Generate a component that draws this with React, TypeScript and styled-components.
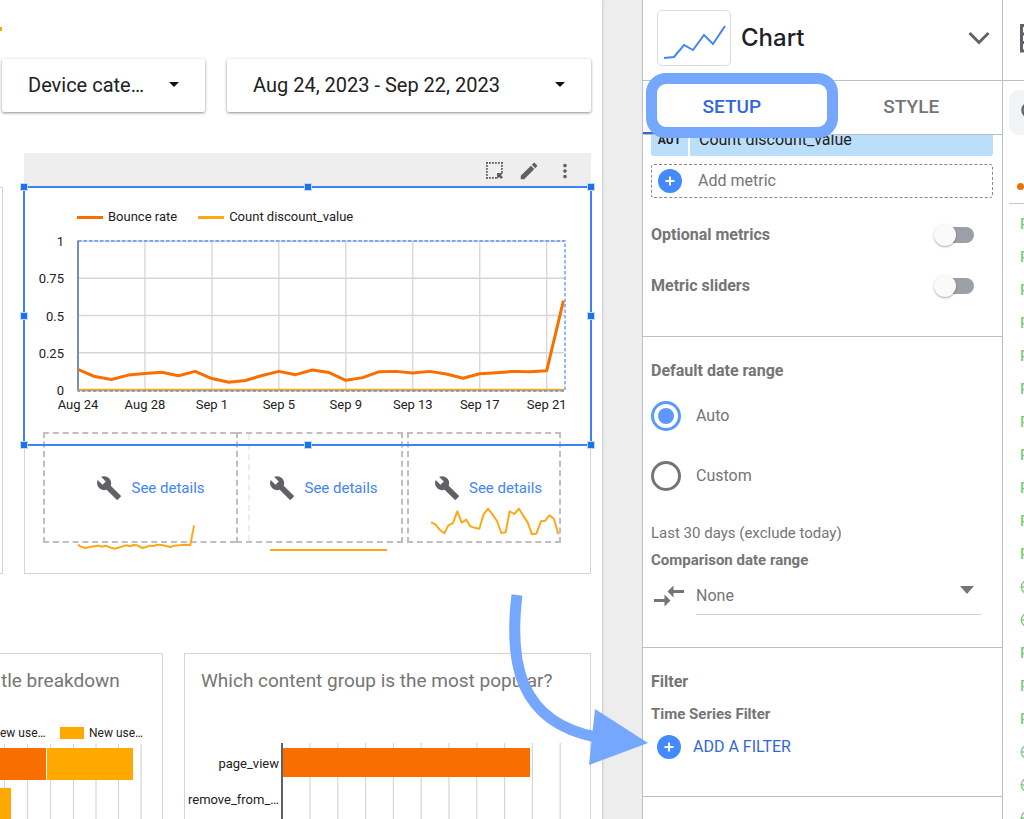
import React from "react";
import styled, { createGlobalStyle, css } from "styled-components";
import { MdBuild, MdCompareArrows, MdEdit, MdMoreVert } from "react-icons/md";
import { Globe, Search } from "lucide-react";

const color = {
  orange: "#f86f00",
  amber: "#ffa800",
  spark: "#ffa817",
  select: "#3d82f0",
  handle: "#1a73e8",
  link: "#4285f4",
  action: "#3367d6",
  mark: "#76a7fe",
  grid: "#d6d6d6",
  rule: "#bdc1c6",
  card: "#d4d4d4",
  muted: "#757575",
};

const GlobalStyle = createGlobalStyle`
  * { box-sizing: border-box; }
  body {
    margin: 0;
    background: #fff;
    color: #212121;
    font-family: Roboto, "Liberation Sans", sans-serif;
    font-size: 16px;
    line-height: 20px;
  }
  button, input, select { font: inherit; margin: 0; }
  svg { display: block; }
`;

const Shell = styled.div`
  display: flex;
  height: 100vh;
  overflow: hidden;
`;

/* ---------- report canvas ---------- */

const Canvas = styled.main`
  flex: 1;
  min-width: 0;
  overflow: hidden;
  background: #ededed;
  padding-right: 40px;
`;

const Page = styled.div`
  min-height: 100%;
  padding-right: 11px;
  background: #fff;
  box-shadow: 0 0 3px rgba(0, 0, 0, 0.25);
`;

const TopStrip = styled.div`
  height: 59px;
  padding-top: 27px;
`;

const LegendTail = styled.div`
  width: 2px;
  height: 4px;
  background: ${color.amber};
`;

const Controls = styled.div`
  display: flex;
  gap: 22px;
  padding-left: 2px;
`;

const Dropdown = styled.button<{ $grow?: boolean }>`
  display: flex;
  align-items: center;
  justify-content: space-between;
  flex: ${(p) => (p.$grow ? "1" : "0 0 203px")};
  height: 53px;
  padding: 0 26px 2px;
  border: 0;
  border-radius: 2px;
  background: #fff;
  color: #212121;
  font-size: 20px;
  text-align: left;
  white-space: nowrap;
  box-shadow: 0 1px 3px rgba(0, 0, 0, 0.45);
`;

const Caret = styled.i<{ $large?: boolean }>`
  display: block;
  width: 0;
  height: 0;
  border-style: solid;
  border-color: ${(p) => (p.$large ? color.muted : "#111")} transparent transparent;
  border-width: ${(p) => (p.$large ? "8px 7px 0" : "5px 5px 0")};
`;

const ChartRow = styled.div`
  display: grid;
  grid-template-columns: 3px minmax(0, 1fr);
  gap: 21px;
  margin-top: 41px;
`;

const NeighbourCard = styled.div`
  margin-top: 34px;
  border: solid ${color.card};
  border-width: 1px 1px 1px 0;
`;

const ChartTools = styled.div`
  display: flex;
  justify-content: flex-end;
  align-items: center;
  gap: 14px;
  height: 34px;
  padding: 2px 15px 0 0;
  background: #eee;
`;

const ToolButton = styled.button`
  padding: 0;
  border: 0;
  background: none;
  color: #616161;
`;

const ChartCard = styled.section`
  position: relative;
  padding: 19px 0 30px;
  border: 1px solid ${color.card};
`;

const Selection = styled.div`
  position: absolute;
  top: -1px;
  left: -1px;
  right: -1px;
  height: 258px;
  outline: 2px solid ${color.select};
  outline-offset: -1px;
  pointer-events: none;
`;

const Handle = styled.i<{ $x: number; $y: number }>`
  position: absolute;
  left: ${(p) => p.$x}%;
  top: ${(p) => p.$y}%;
  width: 8px;
  height: 8px;
  margin: -4px;
  border: 1px solid #c3d8fb;
  background: ${color.handle};
`;

const LineLegend = styled.div`
  display: flex;
  gap: 21px;
  padding-left: 52px;
  font-size: 13px;
`;

const LegendItem = styled.span`
  display: flex;
  align-items: center;
  gap: 5px;
`;

const LineSwatch = styled.i<{ $color: string }>`
  width: 26px;
  height: 3px;
  background: ${(p) => p.$color};
`;

const FluidSvg = styled.svg`
  width: 100%;
  height: auto;
  font-family: Roboto, "Liberation Sans", sans-serif;
  fill: #212121;
`;

const Tiles = styled.div`
  display: grid;
  grid-template-columns: minmax(0, 193fr) minmax(0, 167fr) minmax(0, 158fr);
  margin: 14px 29px 0 18px;
`;

const Tile = styled.div<{ $joined?: boolean; $apart?: boolean; $inset: number }>`
  position: relative;
  display: flex;
  align-items: center;
  justify-content: center;
  gap: 9px;
  height: 111px;
  padding-left: ${(p) => p.$inset}px;
  border: 2px dashed #bdbfc4;
  ${(p) => p.$joined && css`border-right: 0;`}
  ${(p) => p.$apart && css`margin-left: 4px;`}
  color: #5f6164;
  font-size: 15px;
  white-space: nowrap;
`;

const TileGuide = styled.i`
  position: absolute;
  left: 10px;
  top: 0;
  bottom: 0;
  border-left: 2px dashed #ececee;
`;

const DetailsLink = styled.a`
  color: ${color.link};
  text-decoration: none;
`;

const Spark = styled.svg<{ $left: number; $top: number }>`
  position: absolute;
  left: ${(p) => p.$left}px;
  top: ${(p) => p.$top}px;
  fill: none;
  stroke: ${color.spark};
  stroke-width: 6;
  stroke-linejoin: round;
`;

const BreakdownRow = styled.div`
  display: grid;
  grid-template-columns: 163px minmax(0, 1fr);
  gap: 21px;
  margin-top: 79px;
`;

const BarCard = styled.section<{ $cut?: boolean }>`
  padding-top: 15px;
  border: 1px solid ${color.card};
  ${(p) => p.$cut && css`border-left: 0;`}
`;

const BarTitle = styled.h2<{ $cut?: boolean }>`
  margin: 0;
  padding-left: ${(p) => (p.$cut ? 1 : 16)}px;
  color: ${color.muted};
  font-size: 19px;
  font-weight: 400;
  line-height: 24px;
  white-space: nowrap;
`;

const BarLegend = styled.div`
  display: grid;
  grid-template-columns: 40px 1fr;
  gap: 20px;
  margin-top: 32px;
  font-size: 12px;
  line-height: 16px;
  white-space: nowrap;
`;

const BoxSwatch = styled.i`
  width: 24px;
  height: 12px;
  background: ${color.amber};
`;

const BarPlot = styled.div`
  margin-top: 50px;
`;

/* ---------- setup panel ---------- */

const Panel = styled.aside`
  position: relative;
  display: flex;
  flex-direction: column;
  flex: 0 0 361px;
  background: #fff;
  border: solid ${color.rule};
  border-width: 0 1px;
`;

const PanelHeader = styled.header`
  display: flex;
  align-items: center;
  flex: none;
  gap: 10px;
  height: 81px;
  padding: 0 12px 4px 14px;
  border-bottom: 1px solid ${color.rule};
`;

const ChartThumb = styled.div`
  width: 74px;
  height: 56px;
  border: 1px solid #dadce0;
  border-radius: 5px;
`;

const PanelTitle = styled.h1`
  flex: 1;
  margin: 0;
  color: #202124;
  font-family: Inter, Roboto, sans-serif;
  font-size: 24px;
  font-weight: 500;
  line-height: 32px;
`;

const Tabs = styled.div`
  display: flex;
  flex: none;
  height: 54px;
  border-bottom: 1px solid ${color.rule};
`;

const Tab = styled.button<{ $active?: boolean }>`
  position: relative;
  flex: 1;
  padding: 0 2px 2px 0;
  border: 0;
  background: none;
  color: ${(p) => (p.$active ? color.action : color.muted)};
  font-size: 19px;
  font-weight: 500;
  ${(p) =>
    p.$active &&
    css`
      box-shadow: inset 0 -2px ${color.action};
    `}
`;

const TabFocus = styled.span`
  position: absolute;
  z-index: 1;
  top: -8px;
  left: 3px;
  right: -15px;
  bottom: -4px;
  border: 11px solid ${color.mark};
  border-radius: 20px;
`;

const PanelBody = styled.div`
  flex: 1;
  min-height: 0;
  overflow: hidden;
`;

const Section = styled.section<{ $height: number }>`
  height: ${(p) => p.$height}px;
  padding: 0 9px 0 8px;
  border-bottom: 1px solid ${color.rule};
`;

const MetricChip = styled.div`
  display: flex;
  gap: 2px;
  height: 32px;
  margin-top: -11px;
  border-radius: 3px;
  overflow: hidden;
  line-height: 32px;
  color: #202124;
`;

const ChipType = styled.span`
  width: 37px;
  background: #bbdefb;
  font-size: 12px;
  font-weight: 700;
  text-align: center;
`;

const ChipName = styled.span`
  flex: 1;
  padding-left: 9px;
  background: #bbdefb;
`;

const AddMetric = styled.button`
  display: flex;
  align-items: center;
  gap: 16px;
  width: 100%;
  height: 34px;
  margin-top: 8px;
  padding: 0 6px;
  border: 1px dashed #8a8a8a;
  border-radius: 3px;
  background: none;
  color: ${color.muted};
`;

const ToggleRow = styled.label`
  display: flex;
  align-items: center;
  justify-content: space-between;
  height: 51px;
  padding-right: 19px;
  color: ${color.muted};
  font-weight: 700;
`;

const ToggleGroup = styled.div`
  padding-top: 11px;
`;

const Toggle = styled.input`
  appearance: none;
  position: relative;
  width: 34px;
  height: 16px;
  border-radius: 8px;
  background: #9aa0a6;
  &::before {
    content: "";
    position: absolute;
    left: -6px;
    top: -3px;
    width: 22px;
    height: 22px;
    border-radius: 50%;
    background: #fafafa;
    box-shadow: 0 1px 2px rgba(0, 0, 0, 0.35);
  }
`;

const SectionTitle = styled.h3<{ $small?: boolean }>`
  margin: 0;
  padding-top: ${(p) => (p.$small ? 0 : 24)}px;
  color: ${color.muted};
  font-size: ${(p) => (p.$small ? 15 : 16)}px;
  font-weight: 700;
  line-height: 20px;
`;

const RadioGroup = styled.div`
  display: flex;
  flex-direction: column;
  gap: 30px;
  margin-top: 20px;
`;

const RadioLabel = styled.label`
  display: flex;
  align-items: center;
  gap: 15px;
  height: 30px;
  color: ${color.muted};
`;

const Radio = styled.input`
  appearance: none;
  display: grid;
  place-items: center;
  width: 30px;
  height: 30px;
  border: 3px solid ${color.muted};
  border-radius: 50%;
  &:checked {
    border-color: #5c98ff;
  }
  &:checked::before {
    content: "";
    width: 16px;
    height: 16px;
    border-radius: 50%;
    background: #5c98ff;
  }
`;

const Note = styled.p`
  margin: 32px 0 7px;
  color: ${color.muted};
  font-size: 15px;
`;

const SelectRow = styled.label`
  display: flex;
  align-items: center;
  gap: 9px;
  height: 44px;
  margin-top: 4px;
  padding-right: 12px;
  color: ${color.muted};
`;

const SelectBox = styled.span`
  display: flex;
  align-items: flex-start;
  flex: 1;
  padding-right: 7px;
  border-bottom: 1px solid #cfcfcf;
`;

const Select = styled.select`
  appearance: none;
  flex: 1;
  height: 36px;
  padding: 0;
  border: 0;
  background: none;
  color: ${color.muted};
`;

const SelectCaret = styled.span`
  padding-top: 8px;
`;

const FilterName = styled.div`
  padding: 12px 0 11px;
`;

const AddFilter = styled.button`
  display: flex;
  align-items: center;
  gap: 12px;
  padding: 0 6px;
  border: 0;
  background: none;
  color: ${color.action};
`;

const IconButton = styled.button`
  padding: 0;
  border: 0;
  background: none;
`;

const PointerArrow = styled.svg`
  position: absolute;
  z-index: 2;
  left: -137px;
  top: 590px;
  pointer-events: none;
`;

/* ---------- data panel ---------- */

const DataPanel = styled.aside`
  flex: 0 0 21px;
  overflow: hidden;
  white-space: nowrap;
`;

const DataHeader = styled.div`
  height: 81px;
  padding: 24px 0 0 17px;
  border-bottom: 1px solid ${color.rule};
`;

const SearchBox = styled.div`
  width: 200px;
  height: 45px;
  margin: 9px 0 0 6px;
  padding: 11px;
  border-radius: 10px;
  background: #f1f3f4;
  color: #5f6368;
`;

const SourceRow = styled.div`
  width: 200px;
  height: 69px;
  margin-left: 6px;
  padding: 48px 0 0 8px;
  border-bottom: 1px solid #c4c7cc;
`;

const SourceDot = styled.i`
  display: block;
  width: 7px;
  height: 7px;
  border-radius: 50%;
  background: #e8710a;
`;

const FieldList = styled.ul`
  margin: 0;
  padding: 3px 0 0 17px;
  list-style: none;
`;

const Field = styled.li`
  display: flex;
  align-items: center;
  height: 33px;
  color: #81c784;
  font-size: 15px;
  font-weight: 500;
  svg { flex: none; }
`;

/* ---------- data ---------- */

const bounceRate = [
  0.138, 0.09, 0.07, 0.1, 0.11, 0.119, 0.096, 0.125, 0.077, 0.052, 0.064, 0.097,
  0.125, 0.103, 0.134, 0.117, 0.065, 0.083, 0.123, 0.125, 0.114, 0.125, 0.107,
  0.079, 0.109, 0.116, 0.125, 0.123, 0.13, 0.6,
];
const dayTicks = ["Aug 24", "Aug 28", "Sep 1", "Sep 5", "Sep 9", "Sep 13", "Sep 17", "Sep 21"];
const rateTicks = [1, 0.75, 0.5, 0.25, 0];
const fieldKinds = "TTTTTTTTTTTGGTTTGGG".split("");

const plot = { left: 53, top: 14, width: 486, height: 149, step: 16.74 };
const dayX = (i: number) => plot.left + i * plot.step;
const rateY = (v: number) => plot.top + (1 - v) * plot.height;

function TimeSeries() {
  return (
    <FluidSvg viewBox="0 0 565 191" role="img" aria-label="Bounce rate by day">
      {rateTicks.map((v) => (
        <g key={v}>
          <path d={`M${plot.left} ${rateY(v)}h${plot.width}`} stroke={color.grid} strokeWidth="1.3" />
          <text x="39" y={rateY(v) + 5} fontSize="13" textAnchor="end">{v}</text>
        </g>
      ))}
      {dayTicks.map((t, i) => (
        <g key={t}>
          <path d={`M${dayX(i * 4)} ${plot.top}v${plot.height}`} stroke={color.grid} strokeWidth="1.3" />
          <text x={dayX(i * 4)} y="182" fontSize="13" textAnchor="middle">{t}</text>
        </g>
      ))}
      <path d={`M${plot.left} ${plot.top}v${plot.height}`} stroke="#333" strokeWidth="1" />
      <path d={`M${plot.left} 163h${plot.width}`} stroke={color.spark} strokeWidth="2.5" />
      <polyline
        points={bounceRate.map((v, i) => `${dayX(i)},${rateY(v)}`).join(" ")}
        fill="none"
        stroke={color.orange}
        strokeWidth="3"
        strokeLinejoin="round"
      />
      <rect
        x={plot.left}
        y={plot.top}
        width={plot.width + 1}
        height={plot.height + 1}
        fill="none"
        stroke="#5b93ee"
        strokeWidth="1.3"
        strokeDasharray="3.5 2"
      />
    </FluidSvg>
  );
}

function MarqueeIcon() {
  const steps = [0, 3, 6, 9, 12, 15];
  return (
    <svg width="18" height="18" viewBox="0 0 18 18" fill="currentColor" aria-hidden="true">
      {steps.map((s) => (
        <g key={s}>
          <rect x={s} y="0" width="1.8" height="1.8" />
          <rect x="0" y={s} width="1.8" height="1.8" />
          {s < 10 && <rect x={s} y="15" width="1.8" height="1.8" />}
          {s < 10 && <rect x="15" y={s} width="1.8" height="1.8" />}
        </g>
      ))}
      <path d="M11 11H17L15 13L17 15.2L15.2 17L13 15L11 17Z" />
    </svg>
  );
}

function Details() {
  return (
    <>
      <MdBuild size={26} />
      <DetailsLink href="#details">See details</DetailsLink>
    </>
  );
}

function PlusBadge() {
  return (
    <svg width="24" height="24" viewBox="0 0 24 24" aria-hidden="true">
      <circle cx="12" cy="12" r="12" fill="#448aff" />
      <path d="M12 7.5v9M7.5 12h9" stroke="#fff" strokeWidth="2" />
    </svg>
  );
}

export default function App() {
  return (
    <>
      <GlobalStyle />
      <Shell>
        <Canvas>
          <Page>
            <TopStrip>
              <LegendTail />
            </TopStrip>
            <Controls>
              <Dropdown>
                Device cate…
                <Caret />
              </Dropdown>
              <Dropdown $grow>
                Aug 24, 2023 - Sep 22, 2023
                <Caret />
              </Dropdown>
            </Controls>

            <ChartRow>
              <NeighbourCard />
              <div>
                <ChartTools>
                  <ToolButton aria-label="Select area"><MarqueeIcon /></ToolButton>
                  <ToolButton aria-label="Edit"><MdEdit size={22} /></ToolButton>
                  <ToolButton aria-label="More"><MdMoreVert size={22} /></ToolButton>
                </ChartTools>
                <ChartCard>
                  <LineLegend>
                    <LegendItem><LineSwatch $color={color.orange} />Bounce rate</LegendItem>
                    <LegendItem><LineSwatch $color={color.spark} />Count discount_value</LegendItem>
                  </LineLegend>
                  <TimeSeries />
                  <Tiles>
                    <Tile $joined $inset={20}>
                      <Details />
                      <Spark $left={32} $top={90} width="118" height="26" viewBox="0 0 354 78">
                        <path d="M3 62L13 69L26 72L38 69L52 67L65 65L73 68L86 65L98 70L113 74L128 70L146 64L160 67L168 63L181 64L196 72L208 69L218 65L231 66L240 62L255 63L266 66L280 69L293 65L313 63L321 62L340 63L351 4" />
                      </Spark>
                    </Tile>
                    <Tile $inset={8}>
                      <TileGuide />
                      <Details />
                      <Spark $left={32} $top={114} width="117" height="4" viewBox="0 0 351 12">
                        <path d="M0 6H351" />
                      </Spark>
                    </Tile>
                    <Tile $apart $inset={8}>
                      <Details />
                      <Spark $left={21} $top={73} width="130" height="29" viewBox="0 0 390 87">
                        <path d="M3 46L16 52L29 68L43 79L55 55L69 48L82 13L95 47L109 38L121 58L133 62L148 65L161 22L174 5L188 23L201 42L214 78L227 76L239 13L253 21L267 5L279 25L293 46L306 82L319 80L333 43L346 41L358 25L372 36L385 82" />
                      </Spark>
                    </Tile>
                  </Tiles>
                  <Selection>
                    {[0, 50, 100].flatMap((x) =>
                      [0, 50, 100]
                        .filter((y) => x !== 50 || y !== 50)
                        .map((y) => <Handle key={`${x}-${y}`} $x={x} $y={y} />)
                    )}
                  </Selection>
                </ChartCard>
              </div>
            </ChartRow>

            <BreakdownRow>
              <BarCard $cut>
                <BarTitle $cut>tle breakdown</BarTitle>
                <BarLegend>
                  <LegendItem>ew use…</LegendItem>
                  <LegendItem><BoxSwatch />New use…</LegendItem>
                </BarLegend>
                <FluidSvg viewBox="0 0 162 90">
                  {[4.5, 27.5, 50.5, 73.5, 96, 118.5, 141].map((x) => (
                    <path key={x} d={`M${x} 3V90`} stroke={color.grid} strokeWidth="1.2" />
                  ))}
                  <rect x="0" y="7" width="46" height="32" fill={color.orange} />
                  <rect x="46" y="7" width="1.5" height="32" fill="#fff" />
                  <rect x="47" y="7" width="86" height="32" fill={color.amber} />
                  <rect x="0" y="47" width="11" height="32" fill={color.amber} />
                </FluidSvg>
              </BarCard>
              <BarCard>
                <BarTitle>Which content group is the most popular?</BarTitle>
                <BarPlot>
                  <FluidSvg viewBox="0 0 405 86">
                    {Array.from({ length: 10 }, (_, i) => (
                      <path key={i} d={`M${125 + i * 27.8} 0V86`} stroke={color.grid} strokeWidth="1.2" />
                    ))}
                    <rect x="98" y="5" width="247" height="29" fill={color.orange} />
                    <path d="M97 0V86" stroke="#616161" strokeWidth="2" />
                    <text x="94" y="25" fontSize="13" textAnchor="end">page_view</text>
                    <text x="94" y="61" fontSize="13" textAnchor="end">remove_from_…</text>
                  </FluidSvg>
                </BarPlot>
              </BarCard>
            </BreakdownRow>
          </Page>
        </Canvas>

        <Panel>
          <PanelHeader>
            <ChartThumb>
              <svg width="72" height="54" viewBox="0 0 72 54" fill="none" stroke="#4285f4" strokeWidth="2">
                <path d="M6 47L16 46L26 34L35 39L46 24L55 33L67 15" />
              </svg>
            </ChartThumb>
            <PanelTitle>Chart</PanelTitle>
            <IconButton aria-label="Collapse">
              <svg width="22" height="14" viewBox="0 0 22 14" fill="none" stroke="#5f6368" strokeWidth="3">
                <path d="M1.5 2L11 11.5L20.5 2" />
              </svg>
            </IconButton>
          </PanelHeader>
          <Tabs role="tablist">
            <Tab $active role="tab" aria-selected="true">
              <TabFocus />
              SETUP
            </Tab>
            <Tab role="tab" aria-selected="false">STYLE</Tab>
          </Tabs>
          <PanelBody>
            <Section $height={213}>
              <MetricChip>
                <ChipType>AUT</ChipType>
                <ChipName>Count discount_value</ChipName>
              </MetricChip>
              <AddMetric><PlusBadge />Add metric</AddMetric>
              <ToggleGroup>
                <ToggleRow>Optional metrics<Toggle type="checkbox" /></ToggleRow>
                <ToggleRow>Metric sliders<Toggle type="checkbox" /></ToggleRow>
              </ToggleGroup>
            </Section>
            <Section $height={311}>
              <SectionTitle>Default date range</SectionTitle>
              <RadioGroup>
                <RadioLabel><Radio type="radio" name="range" defaultChecked />Auto</RadioLabel>
                <RadioLabel><Radio type="radio" name="range" />Custom</RadioLabel>
              </RadioGroup>
              <Note>Last 30 days (exclude today)</Note>
              <SectionTitle $small>Comparison date range</SectionTitle>
              <SelectRow>
                <MdCompareArrows size={36} />
                <SelectBox>
                  <Select aria-label="Comparison date range" defaultValue="None">
                    <option>None</option>
                  </Select>
                  <SelectCaret><Caret $large /></SelectCaret>
                </SelectBox>
              </SelectRow>
            </Section>
            <Section $height={149}>
              <SectionTitle>Filter</SectionTitle>
              <FilterName>
                <SectionTitle $small>Time Series Filter</SectionTitle>
              </FilterName>
              <AddFilter><PlusBadge />ADD A FILTER</AddFilter>
            </Section>
          </PanelBody>
          <PointerArrow width="144" height="180" viewBox="0 0 144 180">
            <path d="M11 5C3 71 12 132 90 147" fill="none" stroke={color.mark} strokeWidth="11" />
            <path d="M89 119L142 153L83 175Z" fill={color.mark} />
          </PointerArrow>
        </Panel>

        <DataPanel>
          <DataHeader>
            <svg width="30" height="30" viewBox="0 0 30 30" fill="none" stroke="#5f6368" strokeWidth="3">
              <path d="M1.5 1.5H28V27H1.5ZM1.5 10H28M1.5 18.5H28M14 1.5V27" />
            </svg>
          </DataHeader>
          <SearchBox><Search size={20} strokeWidth={3} /></SearchBox>
          <SourceRow><SourceDot /></SourceRow>
          <FieldList>
            {fieldKinds.map((kind, i) => (
              <Field key={i}>{kind === "G" ? <Globe size={16} /> : "RBC"}</Field>
            ))}
          </FieldList>
        </DataPanel>
      </Shell>
    </>
  );
}
